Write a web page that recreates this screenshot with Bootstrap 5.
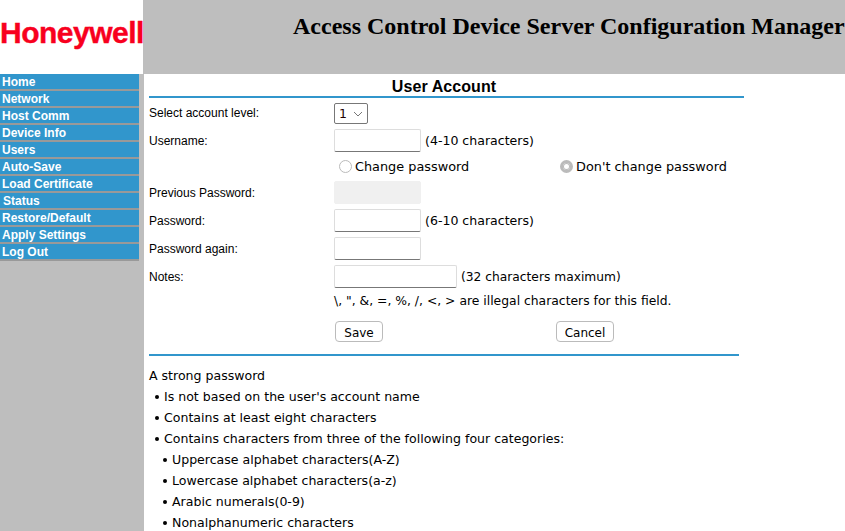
<!DOCTYPE html>
<html lang="en"><head><meta charset="utf-8"><title>User Account</title>
<link href="https://cdn.jsdelivr.net/npm/bootstrap@5.3.0/dist/css/bootstrap.min.css" rel="stylesheet">
<style>
html,body{height:100%;overflow:hidden}
body{background:#fff;color:#000;font-family:"DejaVu Sans",Verdana,sans-serif;font-size:12.55px;line-height:1.2}
.top-band{height:74px;background:#bebebe}
.logo-box{flex:none;width:143px;height:74px;background:#fff;color:#f8001e;font:bold 30px "Liberation Sans",Arial,sans-serif;letter-spacing:-.5px;-webkit-text-stroke:.4px #f8001e;padding-top:16px;white-space:nowrap;overflow:hidden}
.page-title{font:bold 24px "Liberation Serif","Times New Roman",serif;white-space:nowrap;padding:13px 0 0 150px;margin:0}
.side-col{width:144px;background:#bebebe;height:457px;flex:none}
.side-link{display:block;width:139px;height:17px;border-bottom:2px solid #999;background:#3196cc;color:#fff;font:bold 12px/16px "Liberation Sans",Arial,sans-serif;padding-left:2px;text-decoration:none}
.side-link.nudged{padding-left:3px}
.main-col{padding-left:5px;width:600px}
.form-title{width:595px;height:24px;border-bottom:2px solid #3196cc;text-align:center;font:bold 16px/25px "Liberation Sans",Arial,sans-serif;letter-spacing:.08px;padding-right:5px;margin:0}
.form-line{height:23px}
.select-line{height:31px}
.radio-line{height:29px;font-size:12.85px;padding-top:1px}
.spaced-line{margin-bottom:5px}
.note-line{height:26px;font-size:12.37px;padding-top:1px}
.btn-line{height:21px;margin-top:7px}
.form-label-txt{width:185px;font:12px "Liberation Sans",Arial,sans-serif;flex:none}
.select-line .form-label-txt{padding-bottom:1px}
.hint-txt{margin-left:4px;padding-top:1px}
.hint-narrow{font-size:12.25px}
.plain-input{width:87px;height:23px;border:1px solid #ddd;border-bottom:1px solid #777;background:#fff;padding:0;border-radius:2px}
.plain-input:disabled{background:#f0f0f0;border-color:#f0f0f0}
.wide-input{width:123px}
.level-select{width:34px;height:21px;border:1px solid #777;border-radius:2px;padding:0 0 0 4px;background:#fff;font:12.5px "DejaVu Sans",sans-serif;color:#200}
.caret-icon{width:10px;height:6px;margin-left:6px}
.radio-mark{width:13px;height:13px;border:1px solid #bbb;border-radius:50%;background:#fff;flex:none;margin-top:-1px}
.radio-mark.is-on{border:3px solid #bbb;background:#fff;box-shadow:inset 0 0 0 1px #bbb}
.radio-label{width:221px;padding-left:5px}
.radio-label .radio-mark{margin-right:3px}
.radio-on{padding-left:5px}
.radio-on .radio-mark{margin-right:3px}
.act-btn{height:21px;border:1px solid #bbb;border-radius:4px;background:#fff;font:12px/20px "DejaVu Sans",sans-serif;padding:1px 0 0;color:#000}
.save-btn{width:48px;margin-left:1px}
.cancel-btn{width:58px;margin-left:173px}
.rule-blue{width:590px;height:2px;background:#3196cc;margin:12px 0 0}
.tips-box{margin-top:9px}
.tip-line{height:21px;line-height:21px;white-space:nowrap}
.tip-dot{display:inline-block;width:4px;height:4px;border-radius:50%;background:#000;margin:0 5px 2px 6px}
</style></head>
<body>
<div class="d-flex top-band">
  <div class="logo-box">Honeywell</div>
  <h1 class="page-title">Access Control Device Server Configuration Manager</h1>
</div>
<div class="d-flex">
  <nav class="side-col">
    <a class="side-link" href="#">Home</a>
    <a class="side-link" href="#">Network</a>
    <a class="side-link" href="#">Host Comm</a>
    <a class="side-link" href="#">Device Info</a>
    <a class="side-link" href="#">Users</a>
    <a class="side-link" href="#">Auto-Save</a>
    <a class="side-link" href="#">Load Certificate</a>
    <a class="side-link nudged" href="#">Status</a>
    <a class="side-link" href="#">Restore/Default</a>
    <a class="side-link" href="#">Apply Settings</a>
    <a class="side-link" href="#">Log Out</a>
  </nav>
  <main class="main-col">
    <h2 class="form-title">User Account</h2>
    <div class="d-flex align-items-center select-line">
      <span class="form-label-txt">Select account level:</span>
      <span class="level-select d-flex align-items-center">1<svg class="caret-icon" viewBox="0 0 10 6"><path d="M1 1l4 4 4-4" fill="none" stroke="#777"/></svg></span>
    </div>
    <div class="d-flex align-items-center form-line">
      <span class="form-label-txt">Username:</span><input class="plain-input" type="text" aria-label="Username"><span class="hint-txt">(4-10 characters)</span>
    </div>
    <div class="d-flex align-items-center radio-line">
      <span class="form-label-txt"></span>
      <span class="radio-label d-flex align-items-center"><span class="radio-mark"></span>Change password</span>
      <span class="radio-on d-flex align-items-center"><span class="radio-mark is-on"></span>Don't change password</span>
    </div>
    <div class="d-flex align-items-center form-line spaced-line">
      <span class="form-label-txt">Previous Password:</span><input class="plain-input" type="password" disabled aria-label="Previous Password">
    </div>
    <div class="d-flex align-items-center form-line spaced-line">
      <span class="form-label-txt">Password:</span><input class="plain-input" type="password" aria-label="Password"><span class="hint-txt">(6-10 characters)</span>
    </div>
    <div class="d-flex align-items-center form-line spaced-line">
      <span class="form-label-txt">Password again:</span><input class="plain-input" type="password" aria-label="Password again">
    </div>
    <div class="d-flex align-items-center form-line">
      <span class="form-label-txt">Notes:</span><input class="plain-input wide-input" type="text" aria-label="Notes"><span class="hint-txt hint-narrow">(32 characters maximum)</span>
    </div>
    <div class="d-flex align-items-center note-line">
      <span class="form-label-txt"></span><span>\, ", &amp;, =, %, /, &lt;, &gt; are illegal characters for this field.</span>
    </div>
    <div class="d-flex align-items-center btn-line">
      <span class="form-label-txt"></span>
      <button class="act-btn save-btn" type="button">Save</button>
      <button class="act-btn cancel-btn" type="button">Cancel</button>
    </div>
    <div class="rule-blue"></div>
    <div class="tips-box">
      <div class="tip-line">A strong password</div>
      <div class="tip-line"><span class="tip-dot"></span>Is not based on the user's account name</div>
      <div class="tip-line"><span class="tip-dot"></span>Contains at least eight characters</div>
      <div class="tip-line"><span class="tip-dot"></span>Contains characters from three of the following four categories:</div>
      <div class="tip-line ps-2"><span class="tip-dot"></span>Uppercase alphabet characters(A-Z)</div>
      <div class="tip-line ps-2"><span class="tip-dot"></span>Lowercase alphabet characters(a-z)</div>
      <div class="tip-line ps-2"><span class="tip-dot"></span>Arabic numerals(0-9)</div>
      <div class="tip-line ps-2"><span class="tip-dot"></span>Nonalphanumeric characters</div>
    </div>
  </main>
</div>
<script src="https://cdn.jsdelivr.net/npm/bootstrap@5.3.0/dist/js/bootstrap.bundle.min.js"></script>
</body></html>
